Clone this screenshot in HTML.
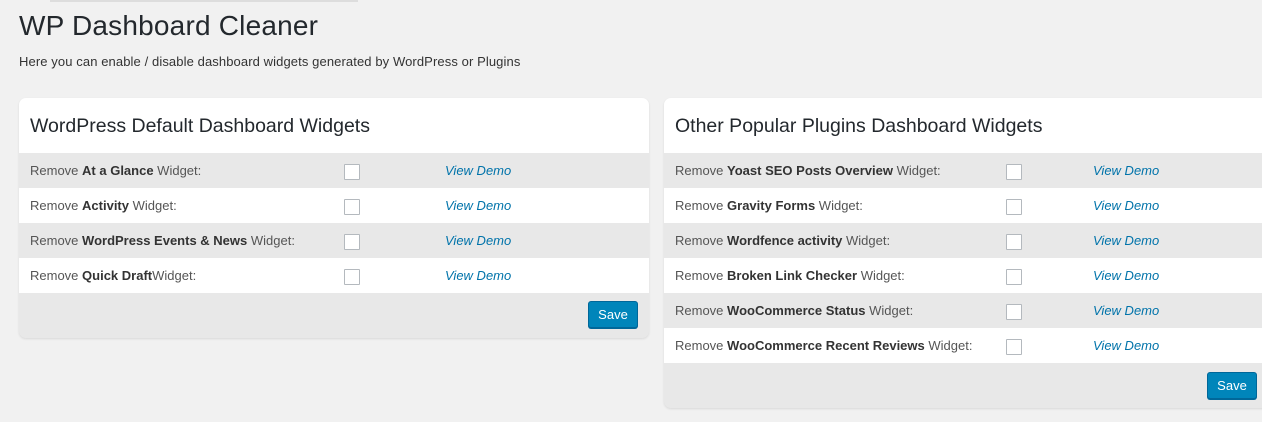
<!DOCTYPE html>
<html><head><style>
body{margin:0;width:1262px;height:422px;background:#f1f1f1;font-family:"Liberation Sans",sans-serif;overflow:hidden;position:relative;color:#444}
.topbar{position:absolute;left:50px;top:0;width:308px;height:2px;background:#ddd}
h1{position:absolute;left:19px;top:10px;margin:0;font-weight:normal;font-size:28px;color:#23282d;letter-spacing:0.2px}
.sub{position:absolute;left:19px;top:54px;font-size:13px;color:#333;letter-spacing:0.1px}
.panel{position:absolute;top:98px;background:#e8e8e8;border-radius:7px;box-shadow:0 1px 2px rgba(0,0,0,.1);overflow:hidden}
.hd{background:#fff;height:55px;box-sizing:border-box;padding:17px 0 0 11px;font-size:19.5px;color:#23282d}
.row{height:35px;position:relative;font-size:13px;color:#555}
.row.w{background:#fff}
.row .l{position:absolute;left:11px;top:10px}
.row b{font-weight:bold;color:#333}
.cb{position:absolute;top:11px;width:14px;height:14px;border:1px solid #b4b9be;background:#fff;border-radius:1px}
.vd{position:absolute;top:10px;font-style:italic;color:#0073aa;font-size:13px}
.save{position:absolute;background:#0085ba;border:1px solid #006799;border-radius:3px;color:#fff;font-size:13px;width:50px;height:27px;box-sizing:border-box;text-align:center;line-height:25px;box-shadow:0 1px 0 #006799}
</style></head><body>
<div class="topbar"></div>
<h1>WP Dashboard Cleaner</h1>
<div class="sub">Here you can enable / disable dashboard widgets generated by WordPress or Plugins</div>

<div class="panel" style="left:19px;width:630px;height:240px">
<div class="hd">WordPress Default Dashboard Widgets</div>
<div class="row"><span class="l">Remove <b>At a Glance</b> Widget:</span><span class="cb" style="left:325px"></span><span class="vd" style="left:426px">View Demo</span></div>
<div class="row w"><span class="l">Remove <b>Activity</b> Widget:</span><span class="cb" style="left:325px"></span><span class="vd" style="left:426px">View Demo</span></div>
<div class="row"><span class="l">Remove <b>WordPress Events &amp; News</b> Widget:</span><span class="cb" style="left:325px"></span><span class="vd" style="left:426px">View Demo</span></div>
<div class="row w"><span class="l">Remove <b>Quick Draft</b>Widget:</span><span class="cb" style="left:325px"></span><span class="vd" style="left:426px">View Demo</span></div>
<div class="save" style="left:569px;top:203px">Save</div>
</div>

<div class="panel" style="left:664px;width:610px;height:310px">
<div class="hd">Other Popular Plugins Dashboard Widgets</div>
<div class="row"><span class="l">Remove <b>Yoast SEO Posts Overview</b> Widget:</span><span class="cb" style="left:342px"></span><span class="vd" style="left:429px">View Demo</span></div>
<div class="row w"><span class="l">Remove <b>Gravity Forms</b> Widget:</span><span class="cb" style="left:342px"></span><span class="vd" style="left:429px">View Demo</span></div>
<div class="row"><span class="l">Remove <b>Wordfence activity</b> Widget:</span><span class="cb" style="left:342px"></span><span class="vd" style="left:429px">View Demo</span></div>
<div class="row w"><span class="l">Remove <b>Broken Link Checker</b> Widget:</span><span class="cb" style="left:342px"></span><span class="vd" style="left:429px">View Demo</span></div>
<div class="row"><span class="l">Remove <b>WooCommerce Status</b> Widget:</span><span class="cb" style="left:342px"></span><span class="vd" style="left:429px">View Demo</span></div>
<div class="row w"><span class="l">Remove <b>WooCommerce Recent Reviews</b> Widget:</span><span class="cb" style="left:342px"></span><span class="vd" style="left:429px">View Demo</span></div>
<div class="save" style="left:543px;top:274px">Save</div>
</div>
</body></html>
